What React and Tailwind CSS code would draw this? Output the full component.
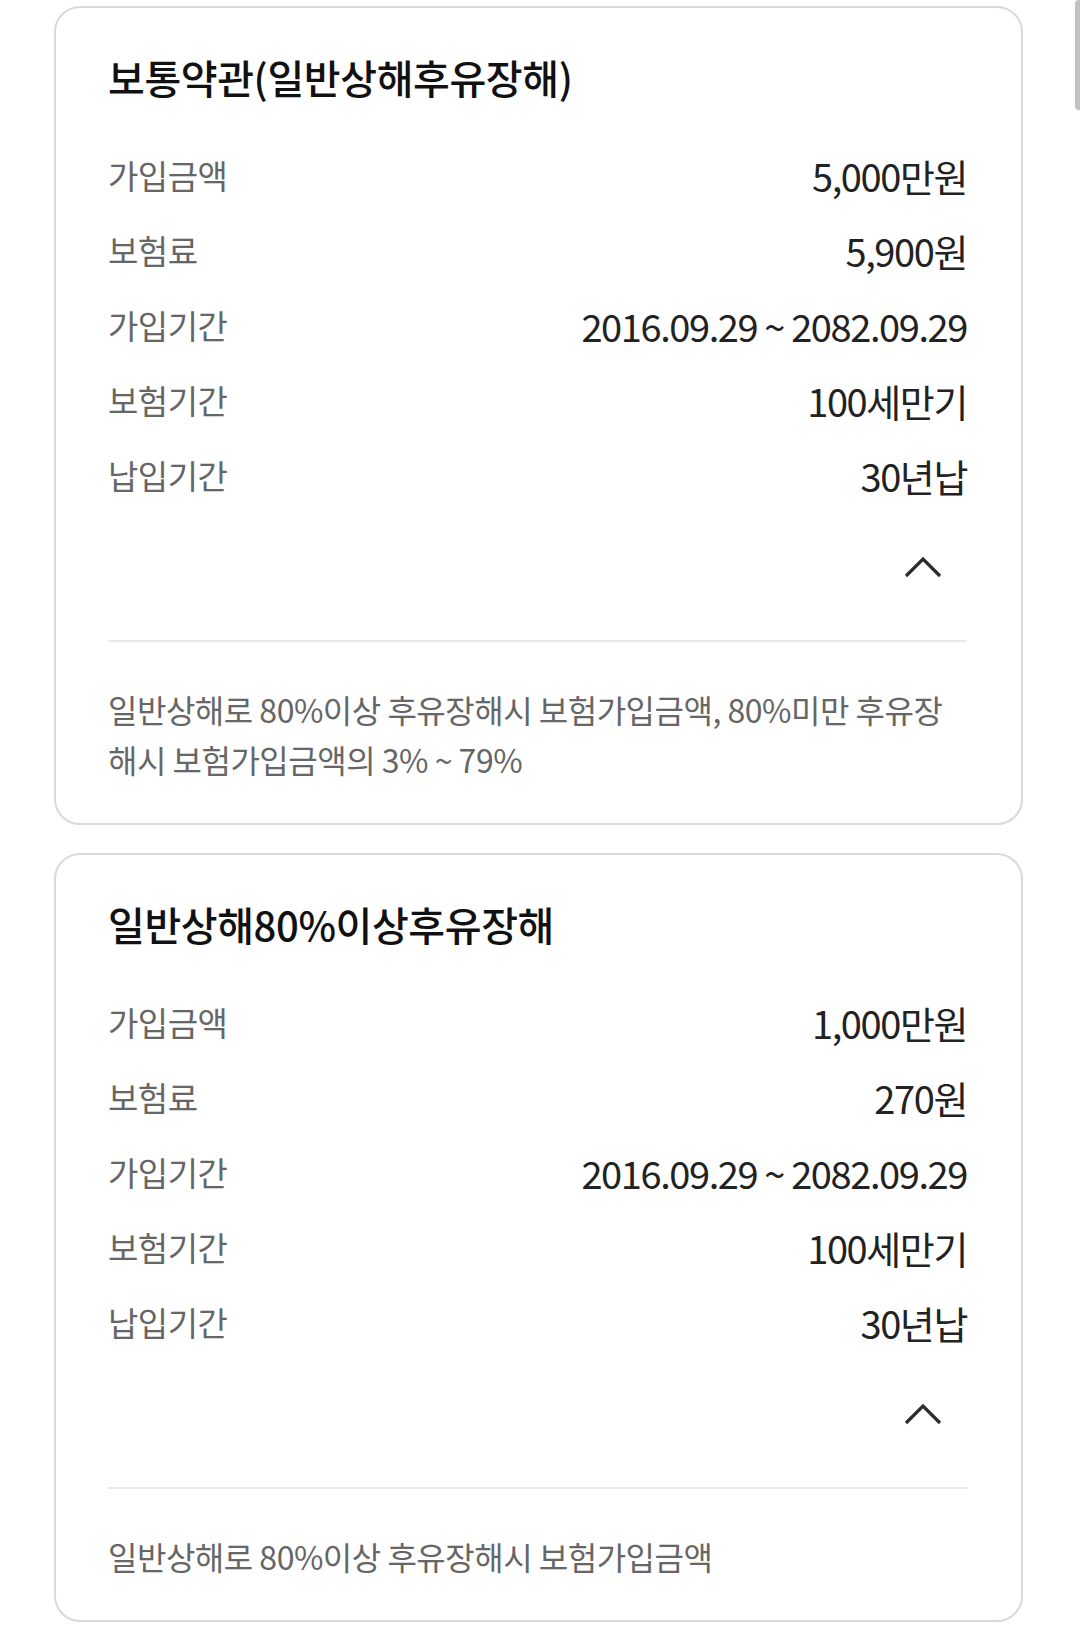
import React from "react";

const cards = [
  {
    title: "보통약관(일반상해후유장해)",
    rows: [
      ["가입금액", "5,000만원"],
      ["보험료", "5,900원"],
      ["가입기간", "2016.09.29 ~ 2082.09.29"],
      ["보험기간", "100세만기"],
      ["납입기간", "30년납"],
    ],
    note: ["일반상해로 80%이상 후유장해시 보험가입금액, 80%미만 후유장", "해시 보험가입금액의 3% ~ 79%"],
  },
  {
    title: "일반상해80%이상후유장해",
    rows: [
      ["가입금액", "1,000만원"],
      ["보험료", "270원"],
      ["가입기간", "2016.09.29 ~ 2082.09.29"],
      ["보험기간", "100세만기"],
      ["납입기간", "30년납"],
    ],
    note: ["일반상해로 80%이상 후유장해시 보험가입금액"],
  },
];

const ChevronUp = () => (
  <svg width="40" height="24" viewBox="0 0 40 24" fill="none">
    <path d="M3 21 L20 4 L37 21" stroke="#2b2b2b" strokeWidth="3.2" />
  </svg>
);

const CoverageCard = ({ card }) => (
  <div className="rounded-[26px] border-2 border-[#d9d9d9] bg-white pl-[52px] pr-[54px] pt-[45px] pb-[39px]">
    <h2 className="text-[40px] leading-[48px] font-medium text-[#111] tracking-[-0.4px]">{card.title}</h2>
    <div className="mt-[37px]">
      {card.rows.map(([label, value]) => (
        <div key={label} className="flex h-[75px] items-center justify-between">
          <span className="text-[33px] text-[#666] tracking-[-0.5px]">{label}</span>
          <span className="text-[38px] text-[#222] tracking-[-1.4px]">{value}</span>
        </div>
      ))}
    </div>
    <div className="mt-[42px] flex justify-end pr-[24px]">
      <ChevronUp />
    </div>
    <div className="mt-[61px] h-[2px] bg-[#e8e8e8]" />
    <p className="mt-[42px] text-[32px] leading-[50px] text-[#666] tracking-[-0.5px]">
      {card.note.map((line) => (
        <span key={line} className="block whitespace-nowrap">
          {line}
        </span>
      ))}
    </p>
  </div>
);

const App = () => {
  return (
    <div className="relative min-h-[1640px] w-[1080px] bg-white font-['Noto_Sans_CJK_KR','Noto_Sans',sans-serif]">
      <div className="ml-[54px] w-[969px] pt-[6px] flex flex-col gap-[28px]">
        {cards.map((card) => (
          <CoverageCard key={card.title} card={card} />
        ))}
      </div>
      {/* scrollbar thumb */}
      <div className="absolute right-0 top-0 h-[110px] w-[5px] rounded-l-sm bg-[#c2c2c2]" />
    </div>
  );
};

export default App;
